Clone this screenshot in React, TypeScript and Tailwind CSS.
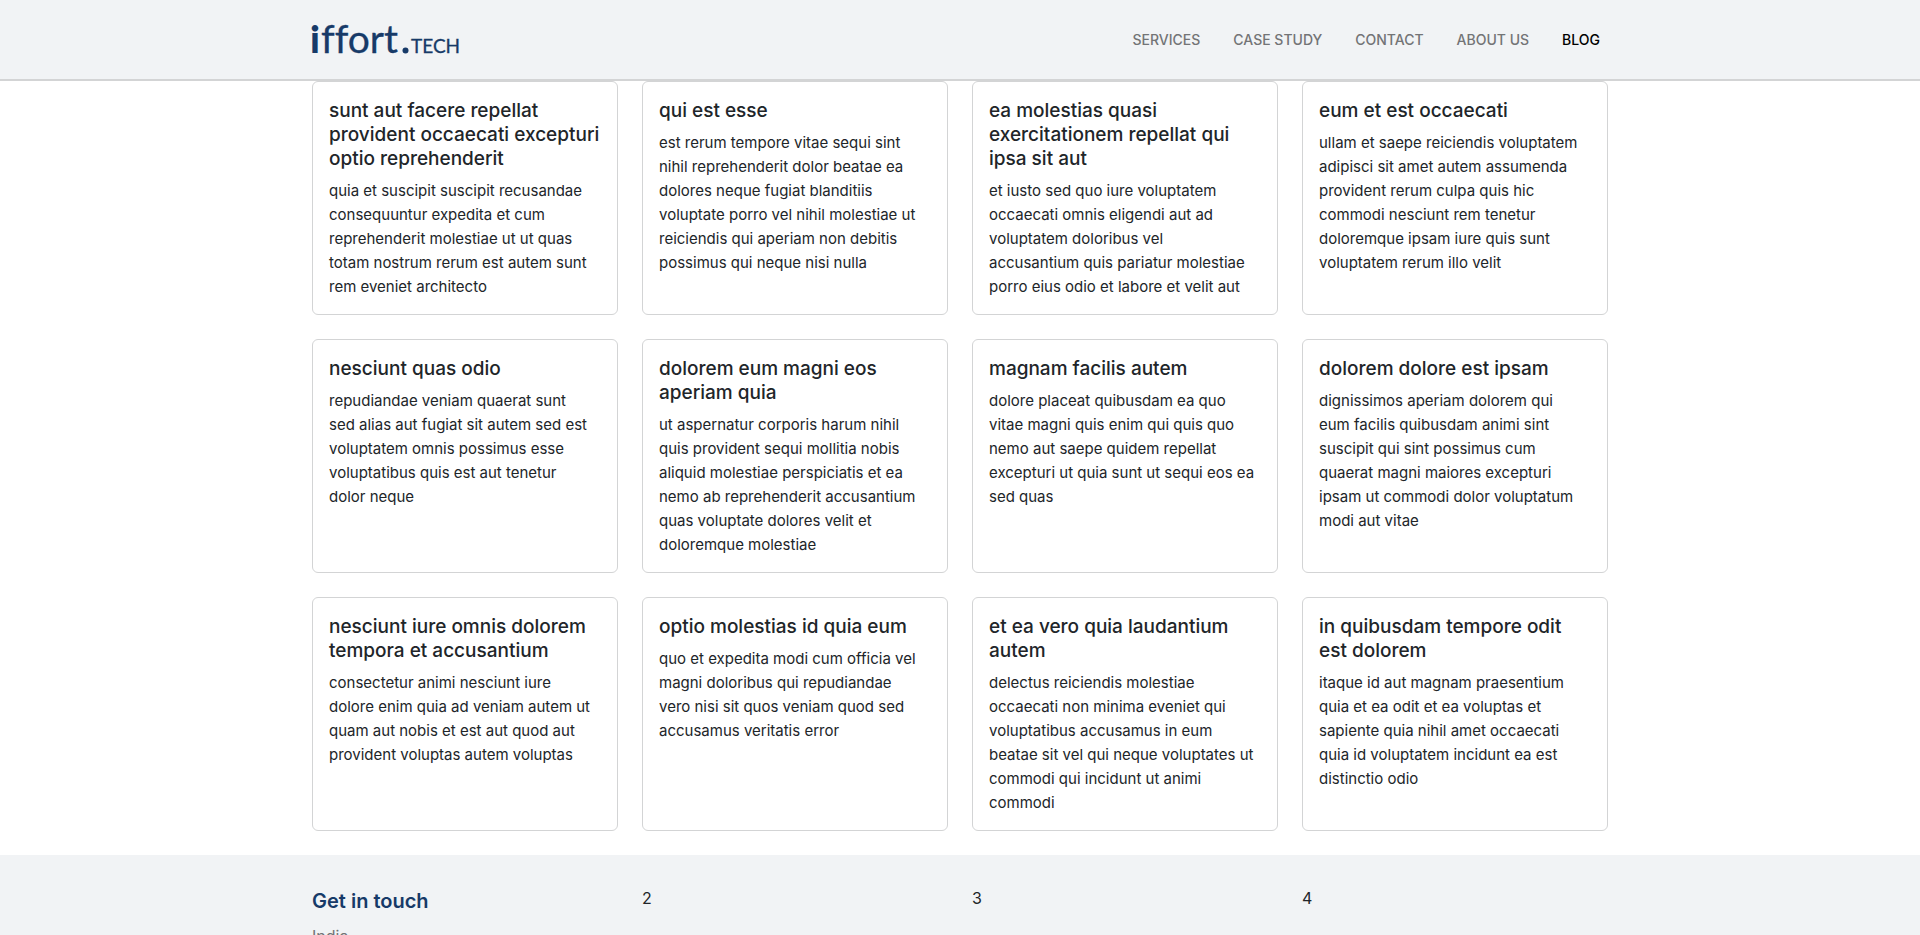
const navItems = [
  { label: "SERVICES", href: "#services" },
  { label: "CASE STUDY", href: "#case-study" },
  { label: "CONTACT", href: "#contact" },
  { label: "ABOUT US", href: "#about" },
  { label: "BLOG", href: "#blog", active: true },
];

const posts = [
  {
    title: ["sunt aut facere repellat", "provident occaecati excepturi", "optio reprehenderit"],
    body: ["quia et suscipit suscipit recusandae", "consequuntur expedita et cum", "reprehenderit molestiae ut ut quas", "totam nostrum rerum est autem sunt", "rem eveniet architecto"],
  },
  {
    title: ["qui est esse"],
    body: ["est rerum tempore vitae sequi sint", "nihil reprehenderit dolor beatae ea", "dolores neque fugiat blanditiis", "voluptate porro vel nihil molestiae ut", "reiciendis qui aperiam non debitis", "possimus qui neque nisi nulla"],
  },
  {
    title: ["ea molestias quasi", "exercitationem repellat qui", "ipsa sit aut"],
    body: ["et iusto sed quo iure voluptatem", "occaecati omnis eligendi aut ad", "voluptatem doloribus vel", "accusantium quis pariatur molestiae", "porro eius odio et labore et velit aut"],
  },
  {
    title: ["eum et est occaecati"],
    body: ["ullam et saepe reiciendis voluptatem", "adipisci sit amet autem assumenda", "provident rerum culpa quis hic", "commodi nesciunt rem tenetur", "doloremque ipsam iure quis sunt", "voluptatem rerum illo velit"],
  },
  {
    title: ["nesciunt quas odio"],
    body: ["repudiandae veniam quaerat sunt", "sed alias aut fugiat sit autem sed est", "voluptatem omnis possimus esse", "voluptatibus quis est aut tenetur", "dolor neque"],
  },
  {
    title: ["dolorem eum magni eos", "aperiam quia"],
    body: ["ut aspernatur corporis harum nihil", "quis provident sequi mollitia nobis", "aliquid molestiae perspiciatis et ea", "nemo ab reprehenderit accusantium", "quas voluptate dolores velit et", "doloremque molestiae"],
  },
  {
    title: ["magnam facilis autem"],
    body: ["dolore placeat quibusdam ea quo", "vitae magni quis enim qui quis quo", "nemo aut saepe quidem repellat", "excepturi ut quia sunt ut sequi eos ea", "sed quas"],
  },
  {
    title: ["dolorem dolore est ipsam"],
    body: ["dignissimos aperiam dolorem qui", "eum facilis quibusdam animi sint", "suscipit qui sint possimus cum", "quaerat magni maiores excepturi", "ipsam ut commodi dolor voluptatum", "modi aut vitae"],
  },
  {
    title: ["nesciunt iure omnis dolorem", "tempora et accusantium"],
    body: ["consectetur animi nesciunt iure", "dolore enim quia ad veniam autem ut", "quam aut nobis et est aut quod aut", "provident voluptas autem voluptas"],
  },
  {
    title: ["optio molestias id quia eum"],
    body: ["quo et expedita modi cum officia vel", "magni doloribus qui repudiandae", "vero nisi sit quos veniam quod sed", "accusamus veritatis error"],
  },
  {
    title: ["et ea vero quia laudantium", "autem"],
    body: ["delectus reiciendis molestiae", "occaecati non minima eveniet qui", "voluptatibus accusamus in eum", "beatae sit vel qui neque voluptates ut", "commodi qui incidunt ut animi", "commodi"],
  },
  {
    title: ["in quibusdam tempore odit", "est dolorem"],
    body: ["itaque id aut magnam praesentium", "quia et ea odit et ea voluptas et", "sapiente quia nihil amet occaecati", "quia id voluptatem incidunt ea est", "distinctio odio"],
  },
];

function Lines({ lines }: { lines: string[] }) {
  return (
    <>
      {lines.map((line) => (
        <span key={line} className="block">
          {line}
        </span>
      ))}
    </>
  );
}

function Logo() {
  return (
    <svg width="164" height="56" viewBox="-4 -8 164 56" role="img" aria-label="iffort.tech" fill="#173a68" className="-ml-1 font-['Lato',sans-serif] [font-variant-ligatures:none]">
      <text x="-2" y="33" fontSize="38" fontWeight="900">i</text>
      <text x="9" y="33" fontSize="39" fontWeight="400" stroke="#173a68" strokeWidth="0.3">ffort</text>
      <circle cx="93.5" cy="30.5" r="3" />
      <text x="99" y="33" fontSize="19" fontWeight="400" stroke="#173a68" strokeWidth="0.3">TECH</text>
    </svg>
  );
}

export default function App() {
  return (
    <div className="min-h-screen bg-white font-['Inter',sans-serif] text-[15px] leading-6 text-[#212529]">
      <header className="border-b-2 border-[#d3d4d5] bg-[#f1f3f5]">
        <div className="mx-auto flex h-[79px] max-w-[1320px] items-center justify-between px-3">
          <a href="#home">
            <Logo />
          </a>
          <nav className="flex gap-[33px] pr-2 text-[14px] font-medium">
            {navItems.map((item) => (
              <a key={item.label} href={item.href} className={item.active ? "text-black" : "text-[#737476]"}>
                {item.label}
              </a>
            ))}
          </nav>
        </div>
      </header>

      <main className="mx-auto grid max-w-[1320px] grid-cols-1 gap-6 px-3 pb-6 sm:grid-cols-2 lg:grid-cols-4">
        {posts.map((post) => (
          <article key={post.title[0]} className="rounded-md border border-[#d3d4d5] bg-white px-4 pt-[17px] pb-[15px]">
            <h2 className="mb-2 text-[19px] font-medium">
              <Lines lines={post.title} />
            </h2>
            <p>
              <Lines lines={post.body} />
            </p>
          </article>
        ))}
      </main>

      <footer className="bg-[#f1f3f5]">
        <div className="mx-auto grid max-w-[1320px] grid-cols-1 gap-6 px-3 py-[31px] text-[16px] sm:grid-cols-2 lg:grid-cols-4">
          <div>
            <h2 className="mb-2 text-[20px] leading-[30px] font-semibold text-[#173a68]">Get in touch</h2>
            <p className="text-[#737476]">India</p>
          </div>
          <div>2</div>
          <div>3</div>
          <div>4</div>
        </div>
      </footer>
    </div>
  );
}
